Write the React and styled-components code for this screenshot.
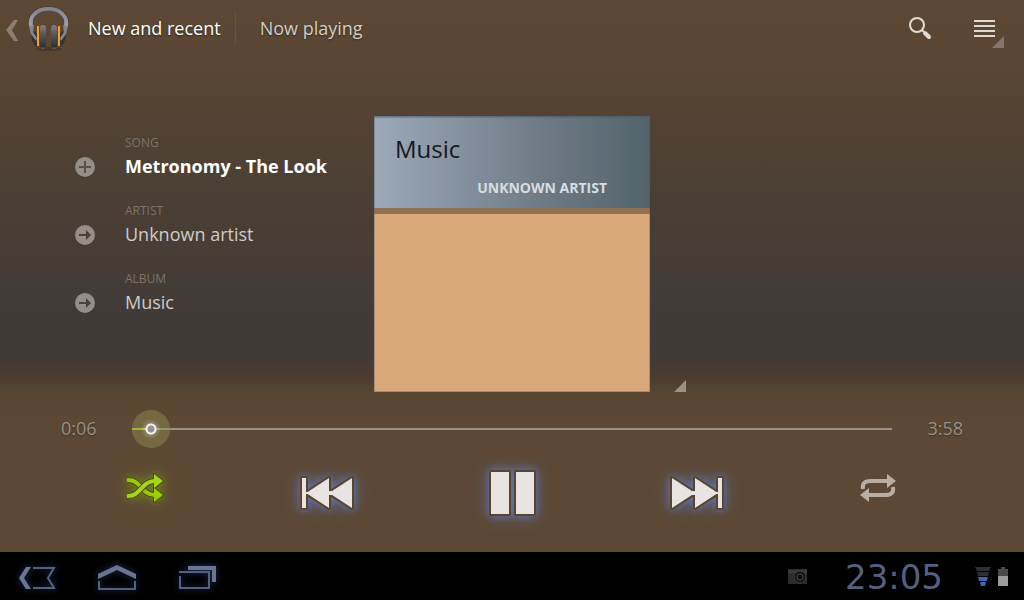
import React, { useState } from "react";
import styled, { createGlobalStyle } from "styled-components";

const GlobalStyle = createGlobalStyle`
  * {
    box-sizing: border-box;
  }
  body {
    margin: 0;
    background: #000;
    font-family: "Open Sans", "Noto Sans", sans-serif;
  }
  button {
    display: flex;
    align-items: center;
    justify-content: center;
    padding: 0;
    border: 0;
    background: none;
    color: inherit;
    font: inherit;
    cursor: pointer;
  }
  svg {
    display: block;
    overflow: visible;
  }
`;

const ScreenStyle = styled.div`
  display: flex;
  flex-direction: column;
  min-height: 100vh;
`;

const PlayerStyle = styled.main`
  flex: 1;
  display: flex;
  flex-direction: column;
  background: linear-gradient(
    #5c4834 0%,
    #594633 12%,
    #504133 25%,
    #463d35 46%,
    #403a37 58%,
    #413935 64%,
    #4a3c30 68%,
    #574532 71%,
    #5c4834 76%
  );
`;

const HeaderStyle = styled.header`
  display: flex;
  align-items: center;
  height: 58px;
  padding: 0 20px 0 4px;
`;

const BackButton = styled.button`
  gap: 8px;
`;

const TabListStyle = styled.nav`
  display: flex;
  flex: 1;
  align-items: center;
  margin-left: 19px;
  padding-bottom: 2px;
`;

const TabStyle = styled.button`
  height: 32px;
  padding-right: 14px;
  font-size: 18px;
  line-height: 24px;
  color: ${(props) => (props.$isActive ? "#fff" : "#d3cec9")};
  text-shadow: 0 1px 2px rgba(0, 0, 0, 0.5);

  & + & {
    padding-left: 24px;
    border-left: 1px solid #68553f;
  }
`;

const ActionsStyle = styled.div`
  display: flex;
  align-items: center;
  gap: 42px;
`;

const MenuButton = styled.button`
  position: relative;
  padding-right: 8px;
`;

const CornerStyle = styled.svg`
  position: absolute;
  right: 0;
  bottom: -8px;
`;

const ContentStyle = styled.section`
  display: grid;
  grid-template-columns: 1fr 276px 1fr;
  margin-top: 58px;
`;

const DetailsStyle = styled.div`
  display: flex;
  flex-direction: column;
  gap: 22px;
  padding: 18px 0 0 74px;
`;

const DetailStyle = styled.div`
  display: flex;
  align-items: flex-end;
  gap: 29px;
`;

const DetailButton = styled.button`
  height: 28px;
`;

const DetailLabel = styled.div`
  font-size: 12px;
  line-height: 18px;
  color: #7d736a;
`;

const DetailValue = styled.div`
  font-size: 18px;
  line-height: 28px;
  font-weight: ${(props) => (props.$isBold ? 700 : 400)};
  color: ${(props) => (props.$isBold ? "#fff" : "#cfcbc7")};
`;

const CoverStyle = styled.div`
  position: relative;
  height: 276px;
  background: #d9a97b;

  &::after {
    content: "";
    position: absolute;
    inset: 0;
    border: 1px solid rgba(80, 90, 100, 0.35);
  }
`;

const CoverHeader = styled.div`
  height: 98px;
  padding: 16px 43px 0 21px;
  border-bottom: 6px solid #917053;
  background: linear-gradient(90deg, #9ca9b9, #6f7b87 60%, #52636b);
  background-clip: padding-box;
  box-shadow: inset 0 2px 1px rgba(70, 95, 115, 0.4);
`;

const CoverTitle = styled.div`
  font-size: 24px;
  line-height: 34px;
  color: #14181c;
`;

const CoverArtist = styled.div`
  margin-top: 12px;
  font-size: 14px;
  line-height: 20px;
  font-weight: 700;
  text-align: right;
  color: #dadde0;
`;

const CoverMenuButton = styled.button`
  align-self: end;
  justify-self: start;
  margin-left: 24px;
`;

const ProgressStyle = styled.div`
  display: flex;
  align-items: center;
  justify-content: space-between;
  gap: 35px;
  margin-top: 18px;
  padding: 0 61px;
`;

const TimeStyle = styled.span`
  padding-bottom: 2px;
  font-size: 18px;
  line-height: 24px;
  color: #988f87;
  text-shadow: 0 1px 2px rgba(0, 0, 0, 0.4);
`;

const SeekInput = styled.input`
  flex: 1;
  min-width: 0;
  height: 38px;
  margin: 0;
  appearance: none;
  background: linear-gradient(90deg, #b4d022 19px, #9b918a 19px) center / 100%
    2px no-repeat;

  &::-webkit-slider-thumb {
    appearance: none;
    width: 38px;
    height: 38px;
    border-radius: 50%;
    background: radial-gradient(
      circle,
      #929297 3px,
      #f2f2f2 4px,
      #f2f2f2 5px,
      rgba(220, 220, 190, 0.4) 6px,
      rgba(148, 144, 80, 0.45) 10px
    );
  }
`;

const ControlsStyle = styled.div`
  display: flex;
  align-items: center;
  justify-content: space-between;
  height: 64px;
  margin: 13px 0 27px;
  padding: 0 128px;
`;

const ControlButton = styled.button`
  width: ${(props) => props.$width}px;
  padding-bottom: ${(props) => (props.$isSmall ? "10px" : 0)};

  svg {
    filter: ${(props) =>
      props.$glow
        ? `drop-shadow(0 0 3px ${props.$glow}) drop-shadow(0 0 8px ${props.$glow})`
        : "none"};
  }
`;

const SystemBarStyle = styled.footer`
  display: flex;
  align-items: center;
  justify-content: space-between;
  height: 48px;
  padding: 2px 16px 0 18px;
  background: #000;
`;

const SystemGroup = styled.div`
  display: flex;
  align-items: center;
  gap: ${(props) => props.$gap}px;
`;

const SystemButton = styled.button`
  padding-top: 2px;
  filter: drop-shadow(0 0 3px #1d3763);
`;

const ClockStyle = styled.time`
  width: 134px;
  font-family: "DejaVu Sans", sans-serif;
  font-size: 34px;
  line-height: 40px;
  text-align: center;
  color: #53607f;
`;

const HeadphonesIcon = () => (
  <svg width="41" height="44" viewBox="0 0 41 44" fill="none">
    <defs>
      <linearGradient id="band" x1="0" y1="0" x2="0" y2="1">
        <stop offset="0" stopColor="#85858a" />
        <stop offset="1" stopColor="#a3a5ad" />
      </linearGradient>
      <linearGradient id="cup" x1="0" y1="0" x2="0" y2="1">
        <stop offset="0" stopColor="#808085" />
        <stop offset="0.4" stopColor="#56565a" />
        <stop offset="0.9" stopColor="#303036" />
        <stop offset="1" stopColor="#6a6a80" />
      </linearGradient>
    </defs>
    <ellipse cx="21" cy="42" rx="13" ry="2" fill="#3a2c20" opacity="0.5" />
    <path d="M3 24L9 26V40C5 38 3 32 3 24ZM38 24L32 26V40C36 38 38 32 38 24Z" fill="#333337" />
    <path d="M3 20C1 9 9 2 20.500 2S40 9 38 20" stroke="#4d4038" strokeWidth="6" />
    <path d="M3 20C1 9 9 2 20.500 2S40 9 38 20" stroke="url(#band)" strokeWidth="4" />
    <path d="M5 14C7 7 13 4 20.500 4S34 7 36 14" stroke="#55565b" />
    <path d="M1 19L6 18L5 25L9 31L8 34L3 27ZM40 19L35 18L36 25L32 31L33 34L38 27Z" fill="#85878f" />
    <rect x="9" y="19" width="2" height="20" fill="#ff9c14" />
    <rect x="30" y="19" width="2" height="20" fill="#ff9c14" />
    <rect x="12" y="18" width="6" height="24" rx="3" fill="url(#cup)" />
    <rect x="23" y="18" width="6" height="24" rx="3" fill="url(#cup)" />
  </svg>
);

const TriangleIcon = ({ color }) => (
  <svg width="12" height="12">
    <path d="M12 0V12H0Z" fill={color} />
  </svg>
);

const DetailIcon = ({ type }) => (
  <svg width="22" height="22" viewBox="0 0 22 22">
    <circle cx="11" cy="13" r="10" fill="#40352c" opacity="0.6" />
    <circle cx="11" cy="12" r="10" fill="#958d87" />
    {type === "plus" ? (
      <path d="M11 6V18M5 12H17" stroke="#5b5048" strokeWidth="2" />
    ) : (
      <g fill="#4b4037">
        <path d="M5 11H12V13H5Z" />
        <path d="M12 7L17 12L12 17Z" />
      </g>
    )}
  </svg>
);

const ShuffleIcon = () => (
  <svg width="38" height="30" viewBox="0 0 38 30">
    <path
      d="M27 1L36 8L27 15ZM27 15L36 22L27 29Z"
      fill="#4b4a16"
      stroke="#4b4a16"
      strokeWidth="2"
      strokeLinejoin="round"
    />
    <path d="M0 7C14 6 14 22 28 22" fill="none" stroke="#4b4a16" strokeWidth="6" />
    <path d="M0 7C14 6 14 22 28 22" fill="none" stroke="#98c90c" strokeWidth="4" />
    <path d="M27 15L36 22L27 29Z" fill="#98d000" />
    <path d="M0 23C14 24 14 8 28 8" fill="none" stroke="#4b4a16" strokeWidth="6" />
    <path d="M0 23C14 24 14 8 28 8" fill="none" stroke="#a4d61a" strokeWidth="4" />
    <path d="M27 1L36 8L27 15Z" fill="#a4d61a" />
  </svg>
);

const SKIP_PATH = "M0 1H4V31H0ZM27 16L50 1V31ZM4 16L27 1V31Z";

const SkipIcon = ({ isNext }) => (
  <svg width="50" height="32" viewBox="0 0 50 32">
    <g transform={isNext ? "translate(50 0) scale(-1 1)" : undefined}>
      <path
        d={SKIP_PATH}
        stroke="#59442f"
        strokeWidth="4"
        strokeLinejoin="round"
      />
      <path d={SKIP_PATH} fill="#e8e4e1" />
      <path d="M25 14H30V18H25ZM4 15H6V17H4Z" fill="#e8e4e1" />
    </g>
  </svg>
);

const PauseIcon = () => (
  <svg width="43" height="44" viewBox="0 0 43 44">
    <g
      fill="#e8e4e1"
      stroke="#59442f"
      strokeWidth="4"
      strokeLinejoin="round"
      paintOrder="stroke"
    >
      <path d="M0 1H18V43H0Z" />
      <path d="M25 1H43V43H25Z" />
    </g>
  </svg>
);

const RepeatIcon = () => (
  <svg width="36" height="30" viewBox="0 0 36 30">
    <g fill="none" stroke="#b8aea6" strokeWidth="4">
      <path d="M3 16C2 10 5 8 11 8H27" />
      <path d="M33 14C34 20 31 22 25 22H8" />
    </g>
    <path d="M27 1L36 8L27 15ZM9 15L0 22L9 29Z" fill="#b8aea6" />
  </svg>
);

const details = [
  { label: "SONG", value: "Metronomy - The Look", icon: "plus", isBold: true },
  { label: "ARTIST", value: "Unknown artist", icon: "arrow" },
  { label: "ALBUM", value: "Music", icon: "arrow" },
];

const Header = () => (
  <HeaderStyle>
    <BackButton aria-label="Back">
      <svg width="16" height="24" viewBox="0 0 16 24">
        <path d="M10 3H14L8 13L14 24H10L2 13Z" fill="#8b7d71" />
      </svg>
      <HeadphonesIcon />
    </BackButton>
    <TabListStyle>
      <TabStyle $isActive>New and recent</TabStyle>
      <TabStyle>Now playing</TabStyle>
    </TabListStyle>
    <ActionsStyle>
      <button aria-label="Search">
        <svg width="24" height="24" viewBox="0 0 24 24">
          <circle cx="9" cy="8" r="7" fill="none" stroke="#e0dcd8" strokeWidth="2" />
          <path d="M14 13L16 15" stroke="#e0dcd8" strokeWidth="2" />
          <path d="M17 16L21 20" stroke="#e0dcd8" strokeWidth="4" strokeLinecap="round" />
        </svg>
      </button>
      <MenuButton aria-label="Menu">
        <svg width="22" height="22" viewBox="0 0 22 22">
          <path
            d="M0 3H21M0 8H21M0 13H21M0 18H21"
            stroke="#ded9d5"
            strokeWidth="2"
          />
        </svg>
        <CornerStyle width="12" height="12">
          <path d="M12 0V12H0Z" fill="#84766a" />
        </CornerStyle>
      </MenuButton>
    </ActionsStyle>
  </HeaderStyle>
);

const SystemBar = () => (
  <SystemBarStyle>
    <SystemGroup $gap={41}>
      <SystemButton aria-label="System back">
        <svg width="38" height="24" viewBox="0 0 38 24" fill="none">
          <path d="M8 1H13L6 12L13 23H8L1 12Z" fill="#6a7591" />
          <path d="M15 2H36L30 12L36 22H15" stroke="#54607e" strokeWidth="2" />
        </svg>
      </SystemButton>
      <SystemButton aria-label="Home">
        <svg width="40" height="26" viewBox="0 0 40 26" fill="none">
          <path d="M1 9L20 0L39 9V14L20 5L1 14Z" fill="#6a7591" />
          <path d="M2 16V24H38V16" stroke="#54607e" strokeWidth="2" />
        </svg>
      </SystemButton>
      <SystemButton aria-label="Recent apps">
        <svg width="38" height="24" viewBox="0 0 38 24" fill="none">
          <path d="M10 0H38V16H34V4H10Z" fill="#6a7591" />
          <path d="M1 6H31V22H2V10" stroke="#54607e" strokeWidth="2" />
        </svg>
      </SystemButton>
    </SystemGroup>
    <SystemGroup $gap={14}>
      <SystemGroup $gap={20}>
        <svg width="19" height="16" viewBox="0 0 19 16">
          <rect width="19" height="15" fill="#2c2c2c" />
          <path d="M0 1H19V4H0Z" fill="#3c3c3c" />
          <circle cx="12" cy="8" r="6" fill="#161616" stroke="#3c3c3c" />
          <circle cx="12" cy="8" r="3" fill="#070707" stroke="#484848" />
        </svg>
        <ClockStyle>23:05</ClockStyle>
      </SystemGroup>
      <SystemGroup $gap={7}>
        <svg width="16" height="20" viewBox="0 0 16 20">
          <path d="M0 0H16L14 4H2ZM2 5H14L13 9H3Z" fill="#2b2f36" />
          <path d="M3 10H13L12 14H4ZM5 15H11L10 19H6Z" fill="#3f65b4" />
        </svg>
        <svg width="10" height="21" viewBox="0 0 10 21">
          <path d="M3 0H7V2H10V9H0V2H3Z" fill="#4a4a4a" />
          <path d="M0 9H10V19H0Z" fill="#9b9b9b" />
        </svg>
      </SystemGroup>
    </SystemGroup>
  </SystemBarStyle>
);

const App = () => {
  const [position, setPosition] = useState(0);

  return (
    <ScreenStyle>
      <GlobalStyle />
      <PlayerStyle>
        <Header />
        <ContentStyle>
          <DetailsStyle>
            {details.map((detail) => (
              <DetailStyle key={detail.label}>
                <DetailButton aria-label={detail.label}>
                  <DetailIcon type={detail.icon} />
                </DetailButton>
                <div>
                  <DetailLabel>{detail.label}</DetailLabel>
                  <DetailValue $isBold={detail.isBold}>{detail.value}</DetailValue>
                </div>
              </DetailStyle>
            ))}
          </DetailsStyle>
          <CoverStyle>
            <CoverHeader>
              <CoverTitle>Music</CoverTitle>
              <CoverArtist>UNKNOWN ARTIST</CoverArtist>
            </CoverHeader>
          </CoverStyle>
          <CoverMenuButton aria-label="Album options">
            <TriangleIcon color="#9b918a" />
          </CoverMenuButton>
        </ContentStyle>
        <ProgressStyle>
          <TimeStyle>0:06</TimeStyle>
          <SeekInput
            type="range"
            aria-label="Seek"
            min="0"
            max="238"
            value={position}
            onChange={(e) => setPosition(Number(e.target.value))}
          />
          <TimeStyle>3:58</TimeStyle>
        </ProgressStyle>
        <ControlsStyle>
          <ControlButton aria-label="Shuffle" $width={36} $isSmall $glow="#87b80066">
            <ShuffleIcon />
          </ControlButton>
          <ControlButton aria-label="Previous" $width={50} $glow="#5f7fd099">
            <SkipIcon />
          </ControlButton>
          <ControlButton aria-label="Pause" $width={43} $glow="#5f7fd099">
            <PauseIcon />
          </ControlButton>
          <ControlButton aria-label="Next" $width={50} $glow="#5f7fd099">
            <SkipIcon isNext />
          </ControlButton>
          <ControlButton aria-label="Repeat" $width={36} $isSmall>
            <RepeatIcon />
          </ControlButton>
        </ControlsStyle>
      </PlayerStyle>
      <SystemBar />
    </ScreenStyle>
  );
};

export default App;
